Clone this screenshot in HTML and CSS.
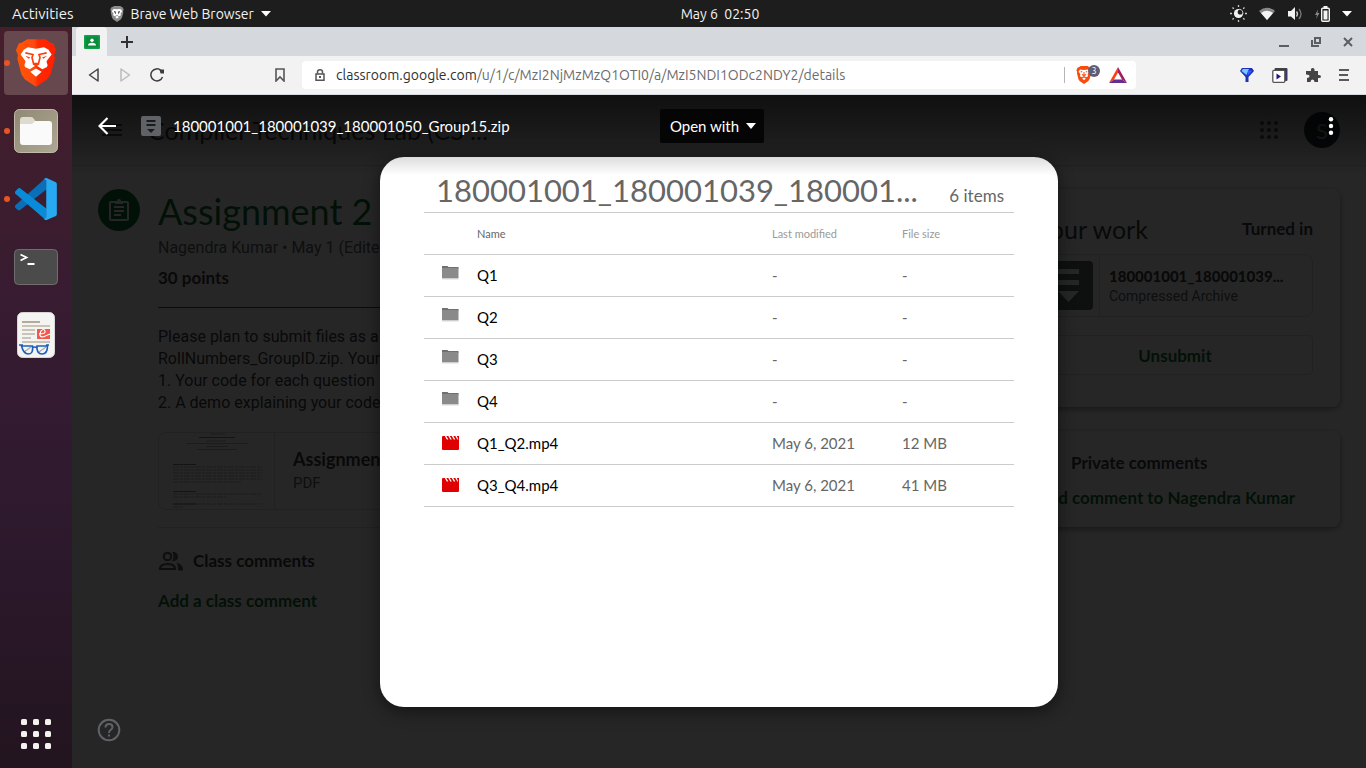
FILE: index.html
```html
<!DOCTYPE html>
<html lang="en">
<head>
<meta charset="utf-8">
<title>Assignment 2</title>
<link rel="stylesheet" href="styles.css">
</head>
<body>
<header class="topbar">
  <div class="topbar-left">
    <button class="activities">Activities</button>
    <button class="app-menu">
      <svg width="14" height="16" viewBox="48 117 120 143"><path fill="#8c8c8c" d="M82 117h56l12 10 10 3 8 20-6 15 3 10-13 47-11 16-33 22-33-22-11-16-12-47 2-10-6-15 8-20 10-3z"/><path fill="#fff" d="M62 165l10-17 13-5 23 4 23-4 14 5 10 17-15 20 3 15-15 8-20-11-20 11-14-8 2-15zM108 205l17 10-17 15-16-15z"/><path fill="#555" d="M80 160l20 8-4 22-10-12zM136 160l-20 8 4 22 10-12z"/></svg>
      <span>Brave Web Browser</span>
      <svg width="10" height="6" viewBox="0 0 10 6"><path fill="#fff" d="M0 0h10L5 5.500z"/></svg>
    </button>
  </div>
  <time class="clock">May 6&nbsp; 02:50</time>
  <div class="topbar-right">
    <svg width="17" height="17" viewBox="0 0 17 17"><circle cx="8.500" cy="8.500" r="4.600" fill="#f2f2f2"/><circle cx="10.300" cy="7" r="2.600" fill="#1d1d1d"/><path fill="none" stroke="#ccc" stroke-width="1" d="M9.500 4.200a4.400 4.400 0 0 1 3.300 5"/><path stroke="#ccc" stroke-width="1.300" d="M8.500 0v2M8.500 15v2M0 8.500h2M15 8.500h2M2.500 2.500l1.300 1.300M13.200 13.200l1.300 1.300M2.500 14.500l1.300-1.300M13.200 3.800l1.300-1.300"/></svg>
    <svg width="16" height="14" viewBox="0 0 16 14"><path fill="#888" d="M0 4Q8-2.500 16 4L8 13z"/><path fill="#f5f5f5" d="M2 6Q8 1.500 14 6L8 13z"/></svg>
    <svg width="16" height="14" viewBox="0 0 16 14"><path fill="#f2f2f2" d="M1 4h3l4-4v13L4 9.500H1z"/><path fill="none" stroke="#ccc" stroke-width="1.300" d="M9.500 4.500q2 2.500 0 5"/><path fill="none" stroke="#777" stroke-width="1.300" d="M12 2q4 5 0 10"/></svg>
    <svg width="15" height="16" viewBox="0 0 15 16"><path fill="#888" d="M3 3.500L0 9h2l-1 4 3.500-6h-2z"/><rect x="6.700" y="2.200" width="7.600" height="13" rx="1" fill="none" stroke="#f2f2f2" stroke-width="1.400"/><path fill="#f2f2f2" d="M8.500 0h4v2h-4zM8.500 4.500h4v9h-4z"/></svg>
    <svg width="10" height="6" viewBox="0 0 10 6"><path fill="#fff" d="M0 0h10L5 5.500z"/></svg>
  </div>
</header>

<div class="desktop">
  <nav class="dock" aria-label="Dock">
    <button class="dock-item running active" aria-label="Brave Web Browser">
      <svg width="40" height="48" viewBox="48 117 120 143"><defs><linearGradient id="lion"><stop offset="0" stop-color="#ff5500"/><stop offset=".45" stop-color="#ff4a10"/><stop offset=".55" stop-color="#ff2a00"/><stop offset="1" stop-color="#ff1f00"/></linearGradient></defs><path fill="url(#lion)" d="M82 117h56l12 10 10 3 8 20-6 15 3 10-13 47-11 16-33 22-33-22-11-16-12-47 2-10-6-15 8-20 10-3z"/><path fill="#fff" d="M62 163l10-15 12-7 24 5 24-5 13 7 10 15-14 18q-3 4 0 8 5 10-5 14l-9 4-19-12-19 12-9-4q-10-4-5-14 3-4 0-8zM108 205l17 10-17 15-17-15z"/><path fill="none" stroke="#ff3d08" stroke-width="5" d="M76 158l23 5-3 9 5 20 7 4 7-4 5-20-3-9 23-5"/><path fill="#ff3d08" d="M76 167l15 5-5 4zM141 167l-15 5 5 4zM98 188h20l-10 8z"/></svg>
    </button>
    <button class="dock-item running" aria-label="Files">
      <svg width="44" height="44" viewBox="0 0 44 44"><defs><linearGradient id="files" x2="1" y2="1"><stop offset="0" stop-color="#8f8973"/><stop offset="1" stop-color="#aea793"/></linearGradient></defs><rect x=".5" y=".5" width="43" height="43" rx="5" fill="url(#files)" stroke="#c0baa8"/><path fill="#dedacd" d="M6 18v-7q0-3 3-3h8q2 0 3 2l2 3h13v6z"/><path fill="#fafafa" d="M6 15h11q2 0 3-2l1-1h14q3 0 3 3v18q0 3-3 3H9q-3 0-3-3z"/></svg>
    </button>
    <button class="dock-item running" aria-label="Visual Studio Code">
      <svg width="42" height="42" viewBox="45 263 126 127"><path fill="#0a6fb8" d="M45 346l88-79 7-4v34l-80 63q-4 2-8-1l-7-7q-2-3 0-6z"/><path fill="#0a8bd8" d="M45 310q-2-3 0-6l7-8q4-4 8-2l80 62v34l-7-4z"/><path fill="#28aaf3" d="M140 263l28 13q3 2 3 6v90q0 4-3 6l-28 12q-5 1-8-4 7 0 7-6V272q0-5-7-5 3-5 8-4z"/></svg>
    </button>
    <button class="dock-item" aria-label="Terminal">
      <svg width="44" height="36" viewBox="0 0 44 36"><rect x=".5" y=".5" width="43" height="35" rx="4" fill="#4b4b4b" stroke="#6e6e6e"/><path fill="none" stroke="#fff" stroke-width="1.800" d="M6.500 5.500l6 3-6 3M13.500 15h7"/></svg>
    </button>
    <button class="dock-item" aria-label="Document Viewer">
      <svg width="38" height="46" viewBox="0 0 38 46"><rect x=".5" y=".5" width="37" height="45" rx="5" fill="#f4f4f3" stroke="#d8d6d4"/><path stroke="#b3ab9c" stroke-width="2" d="M5 10h18"/><path stroke="#c9c4b6" stroke-width="2" d="M5 14h28M5 18h13M5 22h13M5 26h9M5 30h28"/><path fill="#f2594b" d="M20 17h13v10H20z"/><path fill="none" stroke="#fff" stroke-width="1.200" d="M22 22q7 0 6-3t-4 0q-3 6 2 6l7-3"/><path fill="none" stroke="#a9a9a9" stroke-width="1.200" d="M7 40l7-5M22 40l7-5"/><path fill="none" stroke="#1d5fb8" stroke-width="1.600" d="M4.500 34h11q1 8-4 8t-7-8zM20 34h10.500q0 8-5.500 8t-5-8zM15.500 36q2-2 4.500 0M2 33h4M29 33h3"/></svg>
    </button>
    <button class="dock-item show-apps" aria-label="Show Applications">
      <svg width="30" height="30" viewBox="0 0 30 30" fill="#f4f2ee"><rect width="6" height="6" rx="1.500"/><rect x="12" width="6" height="6" rx="1.500"/><rect x="24" width="6" height="6" rx="1.500"/><rect y="12" width="6" height="6" rx="1.500"/><rect x="12" y="12" width="6" height="6" rx="1.500"/><rect x="24" y="12" width="6" height="6" rx="1.500"/><rect y="24" width="6" height="6" rx="1.500"/><rect x="12" y="24" width="6" height="6" rx="1.500"/><rect x="24" y="24" width="6" height="6" rx="1.500"/></svg>
    </button>
  </nav>

  <div class="browser">
    <div class="tabstrip">
      <button class="tab" aria-label="Google Classroom">
        <svg width="16" height="14" viewBox="0 0 16 14"><rect width="16" height="14" rx="1" fill="#12a14b"/><rect x="1.500" y="1.500" width="13" height="11" fill="#0b8b3c"/><circle cx="8" cy="5.300" r="1.700" fill="#fff"/><path fill="#fff" d="M4 10.500q0-2.800 4-2.800t4 2.800z"/></svg>
      </button>
      <button class="tab-new" aria-label="New tab"><svg width="12" height="12" viewBox="0 0 12 12"><path stroke="#303030" stroke-width="2" d="M6 0v12M0 6h12"/></svg></button>
      <div class="window-controls">
        <button aria-label="Minimize"><svg width="10" height="10" viewBox="0 0 10 10"><path fill="#5b5e62" d="M0 8h10v2H0z"/></svg></button>
        <button aria-label="Restore"><svg width="10" height="10" viewBox="0 0 10 10"><path fill="none" stroke="#5b5e62" stroke-width="2" d="M4 1h5v5H4zM1 3v6h7"/></svg></button>
        <button aria-label="Close"><svg width="10" height="10" viewBox="0 0 10 10"><path stroke="#5b5e62" stroke-width="2" d="M1 1l8 8M9 1l-8 8"/></svg></button>
      </div>
    </div>

    <div class="toolbar">
      <div class="nav-buttons">
        <button aria-label="Back"><svg width="12" height="14" viewBox="0 0 12 14"><path fill="none" stroke="#444" stroke-width="1.500" stroke-linejoin="round" d="M10 1v12L1.500 7z"/></svg></button>
        <button aria-label="Forward"><svg width="12" height="14" viewBox="0 0 12 14"><path fill="none" stroke="#bbb" stroke-width="1.500" stroke-linejoin="round" d="M2 1v12l8.500-6z"/></svg></button>
        <button aria-label="Reload"><svg width="14" height="14" viewBox="0 0 14 14"><path fill="none" stroke="#3c3c3c" stroke-width="1.500" d="M12.500 9a6 6 0 1 1-1.500-6.500"/><path fill="#3c3c3c" d="M9.500 1.500h4.500v4h-3.500z"/></svg></button>
        <button class="bookmark" aria-label="Bookmark"><svg width="10" height="14" viewBox="0 0 10 14"><path fill="none" stroke="#555" stroke-width="1.600" d="M1 1h8v12l-4-4-4 4z"/></svg></button>
      </div>
      <div class="address">
        <svg width="10" height="12" viewBox="0 0 10 12"><path fill="none" stroke="#555" stroke-width="1.500" d="M1 5h8v6.200H1zM2.500 5V3q0-2.200 2.500-2.200T7.500 3v2"/><path fill="#555" d="M4 7h2v2H4z"/></svg>
        <label class="url"><span>classroom.google.com</span><input type="text" aria-label="Address" value="/u/1/c/MzI2NjMzMzQ1OTI0/a/MzI5NDI1ODc2NDY2/details"></label>
        <button class="shields" aria-label="Brave Shields">
          <svg width="16" height="18" viewBox="48 117 120 143"><path fill="#fa4a0c" d="M82 117h56l12 10 10 3 8 20-6 15 3 10-13 47-11 16-33 22-33-22-11-16-12-47 2-10-6-15 8-20 10-3z"/><path fill="#fff" d="M65 160l12-15 31 4 31-4 12 15-14 23 3 15-15 8-17-9-17 9-15-8 3-15zM108 208l15 8-15 14-15-14z"/><path fill="none" stroke="#fa4a0c" stroke-width="8" d="M82 163h12M122 163h12M108 165v25M92 184q16 16 32 0"/></svg>
          <span class="count">3</span>
        </button>
        <button aria-label="Rewards"><svg width="18" height="16" viewBox="0 0 18 16"><path fill="#ff4010" d="M9 0L0 16l5-3.500 4-7z"/><path fill="#9e1f63" d="M9 0l9 16-5-3.500-4-7z"/><path fill="#662d91" d="M0 16h18l-5-3.500H5z"/></svg></button>
      </div>
      <div class="extensions">
        <button aria-label="Blue gem extension"><svg width="14" height="14" viewBox="0 0 14 14"><path fill="#1d32b8" d="M2 0h10l2 3-5.500 6v5h-3V9L0 3z"/><path fill="#7cc4ff" d="M3 1h6L6.500 7 1.500 3z"/><path fill="#2a5cff" d="M8 2l4 1-4.500 5z"/></svg></button>
        <button aria-label="Video extension"><svg width="16" height="15" viewBox="0 0 16 15"><path fill="#352a90" stroke="#444" d="M3 .5h12v12h-2V2.500H3z"/><rect x=".8" y="2.300" width="12" height="12" rx="1" fill="#fff" stroke="#555" stroke-width="1.300"/><path fill="#22168c" d="M4.500 5.500l4.500 3-4.500 3z"/></svg></button>
        <button aria-label="Extensions"><svg width="15" height="15" viewBox="0 0 15 15"><path fill="#444" d="M1 3h4q-.5-3 1.700-3t1.800 3H12v4q3-.5 3 1.500t-3 1.500v4H8.500q0-2.500-2-2.500T4.500 14H1v-4q2.500 0 2.500-1.800T0 6.500V3z"/></svg></button>
        <button aria-label="Menu"><svg width="10" height="12" viewBox="0 0 10 12"><path stroke="#5a5a5a" stroke-width="2" d="M0 1h10M0 6h9M0 11h10"/></svg></button>
      </div>
    </div>

    <div class="viewport">
      <div class="page">
        <header class="page-header">
          <button aria-label="Main menu"><svg width="20" height="14" viewBox="0 0 20 14"><path stroke="#5f6368" stroke-width="2" d="M0 2h20M0 7h20M0 12h20"/></svg></button>
          <a class="course" href="#">Compiler Techniques Lab (CS ...</a>
          <button class="apps" aria-label="Google apps"><svg width="18" height="18" viewBox="0 0 18 18" fill="#5f6368"><circle cx="2" cy="2" r="2"/><circle cx="9" cy="2" r="2"/><circle cx="16" cy="2" r="2"/><circle cx="2" cy="9" r="2"/><circle cx="9" cy="9" r="2"/><circle cx="16" cy="9" r="2"/><circle cx="2" cy="16" r="2"/><circle cx="9" cy="16" r="2"/><circle cx="16" cy="16" r="2"/></svg></button>
          <button class="avatar" aria-label="Account">S</button>
        </header>
        <main class="content">
          <div class="badge"><svg width="22" height="24" viewBox="0 0 22 24"><rect x="2" y="4" width="18" height="18" rx="1" fill="none" stroke="#fff" stroke-width="2"/><path fill="#fff" d="M7 3h2a2 2 0 0 1 4 0h2v3H7z"/><path stroke="#fff" stroke-width="2" d="M6 9h10M6 13h10M6 17h7"/></svg></div>
          <article class="assignment">
            <h1>Assignment 2</h1>
            <p class="meta">Nagendra Kumar • May 1 (Edited May 5)</p>
            <p class="points">30 points</p>
            <p class="instructions">Please plan to submit files as a<br>RollNumbers_GroupID.zip. Your<br>1. Your code for each question<br>2. A demo explaining your code,</p>
            <a class="attachment" href="#">
              <svg class="thumb" width="116" height="76" viewBox="0 0 115 76"><g stroke="#bbb" stroke-width="1"><path d="M51 1h15M47 8h20M27 10.500h62M47 13.500h22M38 16.500h40"/><path d="M14 34h89M14 37h89M14 40h89M14 43h89M14 46h89M14 49h68M14 61h89M14 64h53M14 71h89M14 74h10" stroke-dasharray="6 1 3 1"/></g><path stroke="#888" d="M40 4.500h36M14 31.500h23M14 58.500h23M14 71h23"/></svg>
              <span class="file"><strong>Assignment 2.pdf</strong><span>PDF</span></span>
            </a>
            <section class="comments">
              <h2><svg width="26" height="20" viewBox="0 0 26 20"><g fill="none" stroke="#5f6368" stroke-width="2.200"><circle cx="9.500" cy="5.500" r="3.700"/><path d="M2 18q0-5 7.500-5t7.500 5z"/></g><path fill="#5f6368" d="M14 .8q6 0 6 4.700t-6 4.700q3-4.700 0-9.400zM18.500 11.500q7 2 6.500 8h-5q.5-5-1.500-8z"/></svg>Class comments</h2>
              <a href="#">Add a class comment</a>
            </section>
          </article>
          <aside class="sidebar">
            <section class="card work">
              <div class="card-head"><h2>Your work</h2><span>Turned in</span></div>
              <a class="submission" href="#">
                <span class="archive"><svg width="49" height="49" viewBox="0 0 49 49"><rect width="49" height="49" rx="4" fill="#5f6368"/><path fill="#fff" d="M14 8h21v5H14zM14 19h21v5H14zM14 30h21L24.500 41z"/></svg></span>
                <span class="file"><strong>180001001_180001039...</strong><span>Compressed Archive</span></span>
              </a>
              <button class="unsubmit">Unsubmit</button>
            </section>
            <section class="card private">
              <h3><svg width="18" height="18" viewBox="0 0 18 18"><g fill="none" stroke="#5f6368" stroke-width="2"><circle cx="9" cy="5" r="3.500"/><path d="M2 16q0-5 7-5t7 5z"/></g></svg>Private comments</h3>
              <a href="#">Add comment to Nagendra Kumar</a>
            </section>
          </aside>
        </main>
      </div>

      <div class="overlay">
        <div class="viewer-bar">
          <div class="viewer-title">
            <button aria-label="Close"><svg width="18" height="18" viewBox="0 0 18 18"><path fill="none" stroke="#fff" stroke-width="2.200" d="M18 9H2M9.500 1L1.500 9l8 8"/></svg></button>
            <svg width="20" height="20" viewBox="0 0 20 20"><rect width="20" height="20" rx="2" fill="#5f6368"/><path fill="#1b1b1b" d="M5.500 4h9v2h-9zM5.500 8h9v2h-9zM6 13h8l-4 4z"/></svg>
            <span>180001001_180001039_180001050_Group15.zip</span>
          </div>
          <button class="open-with">Open with <svg width="10" height="6" viewBox="0 0 10 6"><path fill="#fff" d="M0 0h10L5 6z"/></svg></button>
          <button class="more" aria-label="More actions"><svg width="6" height="18" viewBox="0 0 6 18" fill="#fff"><circle cx="3" cy="2.300" r="2.200"/><circle cx="3" cy="9" r="2.200"/><circle cx="3" cy="15.700" r="2.200"/></svg></button>
        </div>

        <section class="dialog">
          <div class="dialog-head"><h2>180001001_180001039_180001...</h2><span>6 items</span></div>
          <table class="files">
            <thead><tr><th class="icon"></th><th class="name">Name</th><th class="modified">Last modified</th><th class="size">File size</th></tr></thead>
            <tbody>
              <tr><td class="folder"><svg width="17" height="14"><use href="#folder"/></svg></td><td>Q1</td><td>-</td><td>-</td></tr>
              <tr><td class="folder"><svg width="17" height="14"><use href="#folder"/></svg></td><td>Q2</td><td>-</td><td>-</td></tr>
              <tr><td class="folder"><svg width="17" height="14"><use href="#folder"/></svg></td><td>Q3</td><td>-</td><td>-</td></tr>
              <tr><td class="folder"><svg width="17" height="14"><use href="#folder"/></svg></td><td>Q4</td><td>-</td><td>-</td></tr>
              <tr><td><svg width="17" height="14"><use href="#video"/></svg></td><td>Q1_Q2.mp4</td><td>May 6, 2021</td><td>12 MB</td></tr>
              <tr><td><svg width="17" height="14"><use href="#video"/></svg></td><td>Q3_Q4.mp4</td><td>May 6, 2021</td><td>41 MB</td></tr>
            </tbody>
          </table>
        </section>
        <button class="help" aria-label="Help"><svg width="24" height="24" viewBox="0 0 24 24"><circle cx="12" cy="12" r="10.300" fill="none" stroke="#5f6368" stroke-width="2"/><path fill="none" stroke="#5f6368" stroke-width="2" d="M8.500 9.500q0-3.500 3.500-3.500t3.500 3q0 1.500-1.700 2.800T12 15"/><path fill="#5f6368" d="M11 16.500h2v2h-2z"/></svg></button>
      </div>
    </div>
  </div>
</div>

<svg class="symbols" width="0" height="0" aria-hidden="true">
  <symbol id="folder" viewBox="0 0 17 14"><path fill="#707070" d="M0 0h5.500l1 1H16.500v2H0z"/><path fill="#8a8a8a" d="M0 2h16.500v10.500H0z"/><path fill="#d8d8d8" d="M0 12.500h16.500v1H0z"/></symbol>
  <symbol id="video" viewBox="0 0 17 14"><path fill="#e00000" d="M0 1q0-1 1-1h16v13q0 1-1 1H1q-1 0-1-1z"/><path fill="#fff" d="M2.800 0h1.500l2 3.500h-1.500zM6.300 0h1.500l2 3.500h-1.500zM9.800 0h1.500l2 3.500h-1.500zM13.300 0h1.500l1.500 3.500h-1z"/></symbol>
</svg>
</body>
</html>
```

FILE: styles.css
```css
* { box-sizing: border-box; }

body {
  margin: 0;
  height: 100vh;
  display: flex;
  flex-direction: column;
  overflow: hidden;
  font-family: Lato, sans-serif;
  font-size: 15px;
}

button {
  padding: 0;
  border: 0;
  background: none;
  color: inherit;
  font: inherit;
  display: flex;
  align-items: center;
  justify-content: center;
}

svg { display: block; flex: none; }
a { color: inherit; text-decoration: none; }
h1, h2, h3, p { margin: 0; font-weight: 400; }

/* Desktop shell */
.topbar {
  flex: none;
  height: 27px;
  padding: 0 14px 0 12px;
  display: grid;
  grid-template-columns: 1fr auto 1fr;
  align-items: center;
  background: #1d1d1d;
  color: #f2f2f2;
  font-family: Ubuntu, "Noto Sans", sans-serif;
  font-size: 14px;
}

.topbar-left { display: flex; gap: 36px; }
.activities { font-size: 15px; }
.app-menu { gap: 7px; }
/* Centred over the browser window rather than over the dock as well */
.clock { margin-left: 76px; }
.topbar-right { display: flex; align-items: center; justify-content: flex-end; gap: 12px; }

.desktop { flex: 1; min-height: 0; display: flex; }

.dock {
  flex: none;
  width: 72px;
  padding: 4px 4px 2px;
  display: flex;
  flex-direction: column;
  gap: 4px;
  background: linear-gradient(#451f2b, #3a1c30 30%, #301a30 60%, #22141f);
}

.dock-item { position: relative; height: 64px; border-radius: 4px; }
.dock-item.active { background: #67484f; }
.show-apps { margin-top: auto; }

.running::before {
  content: "";
  position: absolute;
  left: 0;
  top: 29px;
  width: 6px;
  height: 6px;
  border-radius: 3px;
  background: #e95420;
}

/* Browser chrome */
.browser { flex: 1; min-width: 0; display: flex; flex-direction: column; }

.tabstrip {
  flex: none;
  height: 29px;
  padding-left: 4px;
  display: flex;
  background: #d5d8dd;
}

.tab { width: 31px; border-radius: 4px 4px 0 0; background: #f2f2f2; }
.tab-new { width: 40px; }
.window-controls { margin-left: auto; padding-right: 13px; display: flex; gap: 22px; }

.toolbar {
  flex: none;
  height: 39px;
  display: grid;
  grid-template-columns: 230px 1fr 230px;
  align-items: center;
  background: #f2f2f2;
  border-bottom: 1px solid #d5d8dd;
}

.nav-buttons { display: flex; gap: 19px; padding: 0 17px 0 16px; }
.bookmark { margin-left: auto; }
.extensions { display: flex; justify-content: flex-end; gap: 18px; padding-right: 17px; }

.address {
  height: 28px;
  padding: 0 9px 0 13px;
  display: flex;
  align-items: center;
  gap: 11px;
  border-radius: 4px;
  background: #fff;
  font-family: Ubuntu, "Noto Sans", sans-serif;
  font-size: 14px;
}

.url { flex: 1; min-width: 0; display: flex; align-items: center; color: #303030; }
.url input {
  flex: 1;
  min-width: 0;
  padding: 0;
  border: 0;
  outline: 0;
  background: none;
  color: #6c6c6c;
  font: inherit;
}

.shields {
  position: relative;
  width: 34px;
  height: 18px;
  padding-left: 12px;
  justify-content: flex-start;
}
.shields::before { content: ""; position: absolute; left: 0; top: 1px; width: 1px; height: 16px; background: #b5b5b5; }
.count {
  position: absolute;
  left: 24px;
  top: -1px;
  width: 12px;
  height: 12px;
  border-radius: 6px;
  background: #5e5e78;
  color: #fff;
  font-size: 9px;
  line-height: 12px;
  text-align: center;
}

/* Page and overlay share one cell */
.viewport {
  flex: 1;
  min-height: 0;
  display: grid;
  grid-template: minmax(0, 1fr) / minmax(0, 1fr);
  background: #fff;
}
.page, .overlay { grid-area: 1 / 1; min-height: 0; }

.page { overflow: hidden; color: #3c4043; }

.page-header {
  height: 71px;
  padding: 0 26px 0 30px;
  display: flex;
  align-items: center;
  border-bottom: 1px solid #dadce0;
}
.course { margin-left: 26px; font-size: 25px; }
.apps { margin-left: auto; }
.avatar {
  width: 36px;
  height: 36px;
  margin-left: 26px;
  border-radius: 50%;
  background: #263238;
  color: #b0b8bc;
  font-size: 22px;
}

.content {
  padding: 23px 26px;
  display: grid;
  grid-template-columns: 42px 1fr 330px;
  align-items: start;
}

.badge {
  height: 42px;
  border-radius: 50%;
  display: grid;
  place-items: center;
  background: #137333;
}

.assignment { padding: 0 24px 0 18px; }
.assignment h1 { font-size: 36px; line-height: 44px; color: #137333; }
.meta { margin-top: 4px; line-height: 22px; font-family: Roboto, sans-serif; font-size: 16px; color: #5f6368; white-space: nowrap; }
.points { padding: 8px 0 18px; line-height: 22px; font-size: 17px; font-weight: 700; border-bottom: 1px solid #137333; }
.instructions { margin-top: 18px; font-family: Roboto, sans-serif; font-size: 16px; line-height: 22px; }

.attachment, .submission {
  display: flex;
  border: 1px solid #dadce0;
  border-radius: 8px;
}
.attachment { margin-top: 18px; }
.thumb { border-right: 1px solid #dadce0; }
.file { display: flex; flex-direction: column; justify-content: center; min-width: 0; }
.file span { font-family: Roboto, sans-serif; color: #5f6368; }
.attachment .file { padding-left: 18px; line-height: 24px; }
.attachment .file strong { font-size: 18px; }

.comments { margin-top: 17px; padding-top: 22px; border-top: 1px solid #dadce0; font-size: 17px; font-weight: 700; }
.comments h2 { display: flex; align-items: center; gap: 9px; font-size: 17px; line-height: 22px; font-weight: 700; }
.comments a { display: block; margin-top: 18px; line-height: 22px; color: #137333; }

.sidebar { display: grid; gap: 24px; font-size: 17px; font-weight: 700; }
.card { padding: 26px 27px; border-radius: 8px; background: #fff; box-shadow: 0 2px 6px rgba(0, 0, 0, .4); }
.card-head { display: flex; align-items: center; justify-content: space-between; line-height: 28px; }
.card-head h2 { font-size: 25px; }
.submission { margin-top: 11px; height: 63px; font-size: 15px; }
.archive { width: 62px; display: grid; place-items: center; border-right: 1px solid #dadce0; }
.submission .file { padding-left: 9px; line-height: 20px; }
.submission .file span { font-size: 14px; font-weight: 400; }
.unsubmit { width: 100%; height: 40px; margin-top: 18px; border: 1px solid #dadce0; border-radius: 4px; color: #137333; }
.work { padding-bottom: 32px; }
.private { padding: 21px 0 18px 27px; white-space: nowrap; line-height: 22px; }
.private h3 { display: flex; align-items: center; gap: 16px; font-size: 17px; font-weight: 700; }
.private a { display: block; margin-top: 13px; color: #137333; }

.overlay {
  position: relative;
  display: flex;
  flex-direction: column;
  align-items: center;
  background: rgba(0, 0, 0, .85);
}
.overlay::after {
  content: "";
  position: absolute;
  inset: 0 0 auto;
  height: 80px;
  background: linear-gradient(rgba(0, 0, 0, .6), transparent);
  pointer-events: none;
}

.viewer-bar {
  z-index: 1;
  width: 100%;
  height: 62px;
  padding: 0 32px 0 26px;
  display: grid;
  grid-template-columns: 1fr auto 1fr;
  align-items: center;
  color: #fff;
}
.viewer-title { display: flex; align-items: center; white-space: nowrap; }
.viewer-title svg { margin-right: 12px; }
.viewer-title button svg { margin-right: 25px; }
.open-with { height: 34px; margin-right: 8px; padding: 0 8px 0 10px; gap: 7px; background: #050505; border-radius: 2px; }
.more { justify-self: end; }

.dialog {
  width: 678px;
  max-width: 90%;
  min-height: 550px;
  padding: 11px 44px 44px;
  border-radius: 24px;
  background: #fff;
  color: #666;
  box-shadow: 0 4px 15px 2px rgba(0, 0, 0, .4);
}
.dialog-head {
  padding: 0 10px 0 12px;
  display: flex;
  align-items: baseline;
  justify-content: space-between;
  border-bottom: 1px solid #ccc;
  line-height: 20px;
  font-size: 17px;
  white-space: nowrap;
}
.dialog-head h2 { font-size: 31px; line-height: 44px; }

.files { width: 100%; border-collapse: collapse; table-layout: fixed; }
.files tr { height: 42px; border-bottom: 1px solid #ccc; }
.files thead tr { height: 41px; }
.files th, .files td { padding: 0; text-align: left; }
.files th { font-size: 11px; font-weight: 400; color: #9a9a9a; }
.files .name { color: #666; }
.icon { width: 53px; }
.modified { width: 130px; }
.size { width: 112px; }
.files td:first-child { padding-left: 18px; }
.files .folder { padding-bottom: 4px; }
.files td:nth-child(2) { color: #000; }

.help { position: absolute; left: 25px; bottom: 26px; }
.symbols { position: absolute; }
```
